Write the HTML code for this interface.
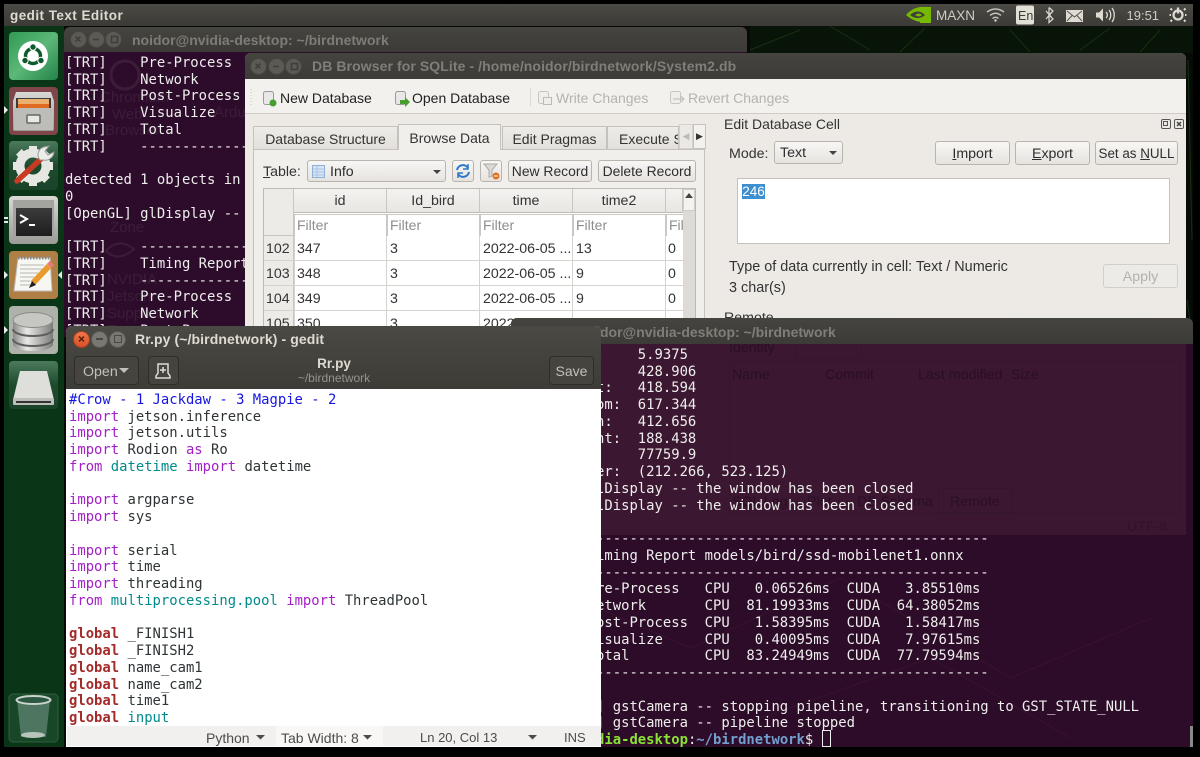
<!DOCTYPE html>
<html lang="en"><head><meta charset="utf-8"><title>gedit Text Editor</title>
<style>
html,body{margin:0;padding:0;background:#000}
body{width:1200px;height:757px;position:relative;overflow:hidden;font-family:"Liberation Sans",sans-serif;font-size:14px;color:#2e2e2e}
div{box-sizing:border-box}
.a,.t{position:absolute}
.t{white-space:pre;line-height:20px}
.mono{font-family:"DejaVu Sans Mono","Liberation Mono",monospace;font-size:13.88px;line-height:16.75px;white-space:pre}
.btn{position:absolute;background:linear-gradient(#f8f7f5,#e6e3df);border:1px solid #b8b4ae;border-radius:3px;text-align:center;line-height:22px;white-space:pre;color:#2e2e2e;font-size:14.2px}
.title{position:absolute;background:linear-gradient(#45443f,#3c3b37);border-radius:6px 6px 0 0}
.wb{position:absolute;width:17px;height:17px;border-radius:50%;background:#5b5a55;border:1px solid #47453f}
.th{position:absolute;top:189px;height:24px;background:linear-gradient(#f4f3f1,#e8e6e2);border-right:1px solid #c9c6c1;border-bottom:1px solid #bdbab5;text-align:center;line-height:25px;font-size:14.2px;color:#333}
.fl{position:absolute;top:214px;height:22px;background:#fff;border:1px solid #cbc8c3;border-bottom:0;color:#8d8d8d;padding-left:2px;line-height:21px;font-size:14px}
.c{position:absolute;font-size:14.2px;color:#333;line-height:20px;white-space:pre}
.tab{position:absolute;top:126px;height:24px;background:linear-gradient(#eeece8,#e3e0db);border:1px solid #c5c2bd;text-align:center;line-height:24px;font-size:14px;color:#333;white-space:pre}
.k{color:#a31fc7}.d{color:#008a8c}.g{color:#a52a2a;font-weight:bold}.n{color:#2e3436}
.gh{position:absolute;white-space:pre;color:#2a0e26;font-size:14.2px;line-height:20px}
</style></head><body>

<!-- wallpaper -->
<div class="a" style="left:4px;top:4px;width:1189px;height:743px;background:#070b07"></div>
<svg class="a" style="left:0;top:0" width="1200" height="757" fill="none">
<rect x="750" y="26" width="443" height="27" fill="#0e2a0e" opacity=".3"/>
<path d="M750 50 L800 30 M830 26 L870 50 M900 52 L925 28 M1010 30 L1030 52 M1080 50 L1110 28 M1140 52 L1160 30 M1188 60 L1192 240 M1187 300 L1193 340" stroke="#173010" stroke-width="1"/>
</svg>

<!-- launcher -->
<div class="a" style="left:4px;top:26px;width:60px;height:721px;background:#0a3516"></div>

<!-- terminal 1 -->
<div class="a" style="left:64px;top:27px;width:683px;height:310px;background:#2d0c2b;border-radius:6px 6px 0 0"></div>
<div class="title" style="left:64px;top:27px;width:683px;height:25px"></div>
<div class="wb" style="left:70px;top:31px"></div><div class="wb" style="left:88px;top:31px"></div><div class="wb" style="left:105px;top:31px"></div>
<div class="t" style="left:132px;top:30px;color:#7e7c76;font-weight:bold;font-size:14px">noidor@nvidia-desktop: ~/birdnetwork</div>
<!-- ghost desktop icons behind terminal 1 -->
<div class="t" style="left:100px;top:89px;color:#3b1c39;font-size:15px;line-height:17px;width:70px">Chromium</div>
<div class="t" style="left:112px;top:106px;color:#3b1c39;font-size:15px;line-height:17px">Web</div>
<div class="t" style="left:105px;top:122px;color:#3b1c39;font-size:15px;line-height:17px">Browser</div>
<div class="t" style="left:214px;top:104px;color:#3b1c39;font-size:15px;line-height:17px">Arduino</div>
<div class="t" style="left:110px;top:219px;color:#3b1c39;font-size:15px;line-height:17px">Zone</div>
<div class="t" style="left:107px;top:271px;color:#3b1c39;font-size:15px;line-height:17px">NVIDIA
Jetson
Support
Forums</div>
<svg class="a" style="left:100px;top:235px" width="40" height="30" fill="none" stroke="#3b1c39" stroke-width="2"><path d="M6 16 Q18 2 34 14 Q18 28 6 16Z"/></svg>
<svg class="a" style="left:105px;top:55px" width="40" height="40" fill="none" stroke="#3b1c39" stroke-width="3"><circle cx="20" cy="20" r="14"/></svg>
<div class="a mono" style="left:65px;top:54.750px;color:#eeeeec;width:180px;height:271px;overflow:hidden;">[TRT]    Pre-Process
[TRT]    Network
[TRT]    Post-Process
[TRT]    Visualize
[TRT]    Total
[TRT]    ---------------

detected 1 objects in image
0
[OpenGL] glDisplay -- the window

[TRT]    ---------------
[TRT]    Timing Report models
[TRT]    ---------------
[TRT]    Pre-Process
[TRT]    Network
[TRT]    Post-Process</div>

<!-- DB Browser window -->
<div class="a" style="left:245px;top:53px;width:941px;height:290px;background:#edeae6;border-radius:6px 6px 0 0"></div>
<div class="title" style="left:245px;top:53px;width:941px;height:26px"></div>
<div class="wb" style="left:250px;top:58px"></div><div class="wb" style="left:268px;top:58px"></div><div class="wb" style="left:285px;top:58px"></div>
<svg class="a" style="left:64px;top:27px" width="260" height="50" fill="none" stroke="#3e3d38" stroke-width="1.500">
<path d="M11.500 9.500l5 5M16.500 9.500l-5 5M29 12.500h6M47.500 9.500h6v6h-6z"/>
<path d="M191.500 36.500l5 5M196.500 36.500l-5 5M209 39.500h6M227.500 36.500h6v6h-6z"/>
</svg>
<div class="t" style="left:312px;top:56px;color:#807e78;font-weight:bold;font-size:14px;letter-spacing:.085px">DB Browser for SQLite - /home/noidor/birdnetwork/System2.db</div>
<div class="a" style="left:245px;top:79px;width:941px;height:35px;background:#f3f1ed;border-bottom:1px solid #cfccc7"></div>

<!-- toolbar -->
<svg class="a" style="left:245px;top:79px" width="560" height="35" fill="none">
<g><rect x="18.500" y="12.500" width="10" height="13" rx="2" fill="#e8e8e8" stroke="#9a9a9a"/><circle cx="28" cy="24" r="3.500" fill="#4a9e2f"/></g>
<g><rect x="150.500" y="12.500" width="10" height="13" rx="2" fill="#e8e8e8" stroke="#9a9a9a"/><path d="M155 21h5v-3l5 5-5 5v-3h-5z" fill="#4a9e2f"/></g>
<rect x="293.500" y="12.500" width="10" height="12" rx="2" fill="#f0eeea" stroke="#c7c5c1"/><rect x="298.500" y="18.500" width="8" height="7" fill="#f0eeea" stroke="#bdbbb7"/>
<rect x="425.500" y="12.500" width="10" height="12" rx="2" fill="#f0eeea" stroke="#c7c5c1"/><path d="M428 20h10M436 17l3 3-3 3" stroke="#bdbbb7"/>
<line x1="285.500" x2="285.500" y1="9" y2="27" stroke="#dcd9d4"/>
<line x1="6" y1="10" x2="6" y2="26" stroke="#c9c6c1" stroke-dasharray="1 2"/>
</svg>
<div class="t" style="left:280px;top:88px;font-size:14px;color:#222">New Database</div>
<div class="t" style="left:412px;top:88px;font-size:14px;color:#222">Open Database</div>
<div class="t" style="left:556px;top:88px;font-size:14px;color:#b5b3af">Write Changes</div>
<div class="t" style="left:688px;top:88px;font-size:14px;color:#b5b3af">Revert Changes</div>

<!-- tab pane -->
<div class="a" style="left:253px;top:149px;width:452px;height:190px;background:#f1efeb;border:1px solid #c5c2bd"></div>
<div class="tab" style="left:253px;width:145px">Database Structure</div>
<div class="tab" style="left:398px;top:124px;height:26px;width:103px;background:#f1efeb;border-bottom:0;z-index:2;line-height:26px">Browse Data</div>
<div class="tab" style="left:502px;width:105px">Edit Pragmas</div>
<div class="tab" style="left:607px;width:72px;text-align:left;padding-left:11px;overflow:hidden">Execute SQL</div>
<div class="a" style="left:679px;top:124px;width:14px;height:25px;background:#ece9e5;border:1px solid #d4d1cc;color:#bbb;font-size:9px;line-height:22px;text-align:center">◀</div>
<div class="a" style="left:693px;top:124px;width:13px;height:25px;background:#f3f1ee;border:1px solid #c5c2bd;color:#333;font-size:9px;line-height:22px;text-align:center">▶</div>

<div class="t" style="left:263px;top:162px;font-size:14.2px;color:#333"><u>T</u>able:</div>
<div class="btn" style="left:307px;top:160px;width:139px;height:22px;text-align:left;padding-left:22px;line-height:22px">Info</div>
<svg class="a" style="left:312px;top:163px" width="140" height="17" fill="none"><rect x=".5" y="2.500" width="12" height="12" fill="#d6e4f5" stroke="#8fb0d8"/><path d="M1 6h11M1 9h11M1 12h11M5 3v11" stroke="#a9c4e4"/><path d="M121 7h8l-4 4z" fill="#444"/></svg>
<div class="btn" style="left:452px;top:160px;width:22px;height:22px"></div>
<svg class="a" style="left:454px;top:162px" width="18" height="18" fill="none" stroke="#2a78c4" stroke-width="2"><path d="M3 8a6 6 0 0 1 11-2M15 10a6 6 0 0 1-11 2"/><path d="M14 2v5h-5M4 16v-5h5" stroke-width="1.500"/></svg>
<div class="btn" style="left:480px;top:160px;width:22px;height:22px"></div>
<svg class="a" style="left:482px;top:162px" width="18" height="18"><path d="M2 2h13l-5 6v6l-3 1V8z" fill="#dcdad6" stroke="#aaa"/><circle cx="14" cy="14" r="3.500" fill="#e0701e"/><rect x="12" y="13.500" width="4" height="1" fill="#fff"/></svg>
<div class="btn" style="left:508px;top:160px;width:84px;height:22px;line-height:21px;font-size:13.900px">New Record</div>
<div class="btn" style="left:598px;top:160px;width:98px;height:22px;line-height:21px;font-size:13.900px">Delete Record</div>

<!-- table -->
<div class="a" style="left:263px;top:188px;width:433px;height:150px;background:#fff;border:1px solid #bdbab5"></div>
<div class="a" style="left:264px;top:189px;width:30px;height:47px;background:#edebe7;border-right:1px solid #c9c6c1;border-bottom:1px solid #c9c6c1"></div>
<div class="th" style="left:294px;width:93px">id</div>
<div class="th" style="left:387px;width:93px">Id_bird</div>
<div class="th" style="left:480px;width:93px">time</div>
<div class="th" style="left:573px;width:93px">time2</div>
<div class="th" style="left:666px;width:17px"></div>
<div class="fl" style="left:294px;width:93px">Filter</div>
<div class="fl" style="left:387px;width:93px">Filter</div>
<div class="fl" style="left:480px;width:93px">Filter</div>
<div class="fl" style="left:573px;width:93px">Filter</div>
<div class="fl" style="left:666px;width:17px;overflow:hidden;border-right:0">Filter</div>
<div class="a" style="left:683px;top:189px;width:12px;height:148px;background:#dedbd7"></div>
<div class="a" style="left:683px;top:189px;width:12px;height:22px;background:#f4f3f0;border:1px solid #d0cdc8"></div>
<svg class="a" style="left:684px;top:192px" width="10" height="8"><path d="M1 6h8L5 1z" fill="#444"/></svg>
<!-- rows -->
<div class="a" style="left:264px;top:236px;width:30px;height:100px;background:#edebe7;border-right:1px solid #c9c6c1"></div>
<svg class="a" style="left:264px;top:236px" width="420" height="100"><path d="M0 24.500h419M0 49.500h419M0 74.500h419M122.500 0v100M215.500 0v100M308.500 0v100M401.500 0v100M30.500 0v100" stroke="#d6d3ce" fill="none"/></svg>
<div class="c" style="left:266px;top:239px">102</div><div class="c" style="left:297px;top:239px">347</div><div class="c" style="left:390px;top:239px">3</div><div class="c" style="left:483px;top:239px">2022-06-05 ...</div><div class="c" style="left:576px;top:239px">13</div><div class="c" style="left:668px;top:239px">0</div>
<div class="c" style="left:266px;top:264px">103</div><div class="c" style="left:297px;top:264px">348</div><div class="c" style="left:390px;top:264px">3</div><div class="c" style="left:483px;top:264px">2022-06-05 ...</div><div class="c" style="left:576px;top:264px">9</div><div class="c" style="left:668px;top:264px">0</div>
<div class="c" style="left:266px;top:289px">104</div><div class="c" style="left:297px;top:289px">349</div><div class="c" style="left:390px;top:289px">3</div><div class="c" style="left:483px;top:289px">2022-06-05 ...</div><div class="c" style="left:576px;top:289px">9</div><div class="c" style="left:668px;top:289px">0</div>
<div class="c" style="left:266px;top:314px">105</div><div class="c" style="left:297px;top:314px">350</div><div class="c" style="left:390px;top:314px">3</div><div class="c" style="left:483px;top:314px">2022-06-05 ...</div>

<!-- right dock -->
<div class="t" style="left:724px;top:114px;font-size:14px;color:#333">Edit Database Cell</div>
<svg class="a" style="left:1160px;top:118px" width="26" height="12" fill="none" stroke="#555"><rect x="1.500" y="1.500" width="9" height="9" rx="1.500"/><rect x="3.500" y="3.500" width="4" height="4"/><rect x="14.500" y="1.500" width="9" height="9" rx="1.500"/><path d="M17 4l4 4M21 4l-4 4" stroke-width="1.500" stroke="#444"/></svg>
<div class="t" style="left:729px;top:144px;font-size:14.2px;color:#333">Mode:</div>
<div class="btn" style="left:774px;top:141px;width:69px;height:23px;text-align:left;padding-left:5px">Text</div>
<svg class="a" style="left:828px;top:150px" width="10" height="6"><path d="M1 1h8L5 5z" fill="#444"/></svg>
<div class="btn" style="left:935px;top:141px;width:75px;height:24px;line-height:24px"><u>I</u>mport</div>
<div class="btn" style="left:1015px;top:141px;width:75px;height:24px;line-height:24px"><u>E</u>xport</div>
<div class="btn" style="left:1095px;top:141px;width:83px;height:24px;line-height:24px;font-size:13.400px">Set as <u>N</u>ULL</div>
<div class="a" style="left:737px;top:178px;width:433px;height:66px;background:#fff;border:1px solid #c5c2bd"></div>
<div class="a" style="left:742px;top:184px;width:23px;height:15px;background:#3d8fcf;color:#fff;font-size:13.5px;line-height:15px;text-align:center">246</div>
<div class="t" style="left:729px;top:257px;font-size:14.4px;color:#333">Type of data currently in cell: Text / Numeric</div>
<div class="t" style="left:729px;top:278px;font-size:14.4px;color:#333">3 char(s)</div>
<div class="btn" style="left:1103px;top:264px;width:75px;height:24px;line-height:24px;color:#b3b1ad;background:#ecebe7;border-color:#d2cfca">Apply</div>
<div class="t" style="left:724px;top:308px;font-size:14.2px;color:#333">Remote</div>

<!-- terminal 2 -->
<div class="a" style="left:511px;top:318px;width:682px;height:429px;background:#2c0c28;border-radius:6px 6px 0 0;overflow:hidden">
 <div class="a" style="left:0;top:26px;width:675px;height:191px;background:#3b1731"></div>
 <svg class="a" style="left:0;top:0" width="682" height="429" fill="none" stroke="#4a1f3c" opacity=".4"><path d="M40 270L180 330L330 260M330 260L500 360M500 360L640 300M250 400L420 340L560 420"/></svg>
</div>
<svg class="a" style="left:511px;top:318px" width="682" height="230" fill="none" stroke="#36152e"><rect x="218.500" y="43.500" width="450" height="152"/><rect x="284.500" y="18.500" width="66" height="22"/><rect x="427.500" y="170.500" width="73" height="24"/></svg>
<div class="gh" style="left:729px;top:338px">Identity</div>
<div class="gh" style="left:732px;top:365px">Name</div>
<div class="gh" style="left:825px;top:365px">Commit</div>
<div class="gh" style="left:918px;top:365px">Last modified</div>
<div class="gh" style="left:1011px;top:365px">Size</div>
<div class="gh" style="left:732px;top:492px">SQL Log</div>
<div class="gh" style="left:807px;top:492px">Plot</div>
<div class="gh" style="left:857px;top:492px">DB Schema</div>
<div class="gh" style="left:950px;top:492px">Remote</div>
<div class="gh" style="left:1127px;top:517px;color:#331329">UTF-8</div>
<div class="title" style="left:511px;top:318px;width:682px;height:26px"></div>
<div class="t" style="left:579px;top:322px;color:#807e78;font-weight:bold;font-size:14px">noidor@nvidia-desktop: ~/birdnetwork</div>
<div class="a mono" style="left:512.500px;top:346.750px;color:#eeeeec;width:680px;height:400px;overflow:hidden">   -- Left:    5.9375
   -- Top:     428.906
   -- Right:   418.594
   -- Bottom:  617.344
   -- Width:   412.656
   -- Height:  188.438
   -- Area:    77759.9
   -- Center:  (212.266, 523.125)
[OpenGL] glDisplay -- the window has been closed
[OpenGL] glDisplay -- the window has been closed

[TRT]    ------------------------------------------------
[TRT]    Timing Report models/bird/ssd-mobilenet1.onnx
[TRT]    ------------------------------------------------
[TRT]    Pre-Process   CPU   0.06526ms  CUDA   3.85510ms
[TRT]    Network       CPU  81.19933ms  CUDA  64.38052ms
[TRT]    Post-Process  CPU   1.58395ms  CUDA   1.58417ms
[TRT]    Visualize     CPU   0.40095ms  CUDA   7.97615ms
[TRT]    Total         CPU  83.24949ms  CUDA  77.79594ms
[TRT]    ------------------------------------------------

[gstreamer] gstCamera -- stopping pipeline, transitioning to GST_STATE_NULL
[gstreamer] gstCamera -- pipeline stopped
<span style="color:#8ae234;font-weight:bold">noidor@nvidia-desktop</span>:<span style="color:#729fcf;font-weight:bold">~/birdnetwork</span>$ </div>
<div class="a" style="left:822px;top:730px;width:9px;height:17px;border:1px solid #eee"></div>
<div class="a" style="left:1190px;top:726px;width:3px;height:21px;background:#8a8a8a"></div>

<!-- gedit -->
<div class="a" style="left:66px;top:326px;width:535px;height:421px;background:#fff;border-radius:6px 6px 0 0;overflow:hidden">
 <div class="a" style="left:0;top:0;width:535px;height:63px;background:linear-gradient(#4a4943,#3d3c37)"></div>
</div>
<div class="wb" style="left:73px;top:331px;background:linear-gradient(#f0774a,#d9502a);border-color:#a8401f"></div>
<div class="wb" style="left:91px;top:331px;background:#7a7872;border-color:#5a5852"></div>
<div class="wb" style="left:109px;top:331px;background:#7a7872;border-color:#5a5852"></div>
<svg class="a" style="left:70px;top:328px" width="60" height="24" fill="none"><path d="M9 8.500l5 5M14 8.500l-5 5" stroke="#5a1f0a" stroke-width="1.500"/><path d="M26 11h7" stroke="#4a4842" stroke-width="2"/><rect x="44.500" y="7.500" width="7" height="7" stroke="#4a4842"/></svg>
<div class="t" style="left:135px;top:329px;color:#dfdbd2;font-weight:bold;font-size:14px;letter-spacing:.1px">Rr.py (~/birdnetwork) - gedit</div>
<div class="a" style="left:74px;top:356px;width:65px;height:29px;border:1px solid #2e2d2a;border-radius:4px;background:#45443f"></div>
<div class="t" style="left:83px;top:362px;color:#c3c0b9;font-size:14.2px">Open</div>
<svg class="a" style="left:119px;top:368px" width="10" height="6"><path d="M0 0h10L5 5z" fill="#c3c0b9"/></svg>
<div class="a" style="left:148px;top:356px;width:31px;height:29px;border:1px solid #2e2d2a;border-radius:4px;background:#45443f"></div>
<svg class="a" style="left:154px;top:362px" width="18" height="18" fill="none" stroke="#dfdbd2" stroke-width="1.500"><path d="M4 2h10v9l2 3v2H2v-2l2-3z"/><path d="M9 5v6M6 8h6"/></svg>
<div class="t" style="left:234px;top:354px;width:200px;text-align:center;color:#dfdbd2;font-weight:bold;font-size:13.500px">Rr.py</div>
<div class="t" style="left:234px;top:368px;width:200px;text-align:center;color:#96938c;font-size:12px">~/birdnetwork</div>
<div class="a" style="left:549px;top:356px;width:45px;height:29px;border:1px solid #2e2d2a;border-radius:4px;background:#45443f;color:#c3c0b9;text-align:center;line-height:28px;font-size:14px">Save</div>
<div class="a mono" style="left:69px;top:391.750px;width:530px;height:334px;overflow:hidden;color:#2e3436"><span style="color:#1616e0">#Crow - 1 Jackdaw - 3 Magpie - 2</span>
<span class="k">import</span> jetson.inference
<span class="k">import</span> jetson.utils
<span class="k">import</span> Rodion <span class="k">as</span> Ro
<span class="k">from</span> <span class="d">datetime</span> <span class="k">import</span> datetime

<span class="k">import</span> argparse
<span class="k">import</span> sys

<span class="k">import</span> serial
<span class="k">import</span> time
<span class="k">import</span> threading
<span class="k">from</span> <span class="d">multiprocessing.pool</span> <span class="k">import</span> ThreadPool

<span class="g">global</span> _FINISH1
<span class="g">global</span> _FINISH2
<span class="g">global</span> name_cam1
<span class="g">global</span> name_cam2
<span class="g">global</span> time1
<span class="g">global</span> <span class="d">input</span></div>
<div class="a" style="left:67px;top:726px;width:534px;height:20px;background:#f1f0ee"></div>
<div class="a" style="left:276px;top:726px;width:107px;height:20px;background:#f8f7f6"></div>
<div class="t" style="left:206px;top:728px;font-size:14px;color:#4c4c4c">Python</div>
<div class="t" style="left:281px;top:728px;font-size:14px;color:#4c4c4c">Tab Width: 8</div>
<div class="t" style="left:420px;top:728px;font-size:13px;color:#4c4c4c">Ln 20, Col 13</div>
<div class="t" style="left:564px;top:728px;font-size:13px;color:#4c4c4c">INS</div>
<svg class="a" style="left:250px;top:733px" width="290" height="8" fill="#4c4c4c"><path d="M6 2h9l-4.500 4.500zM113 2h9l-4.500 4.500zM278 2h9l-4.500 4.500z"/></svg>

<!-- top panel -->
<div class="a" style="left:4px;top:4px;width:1189px;height:22px;background:linear-gradient(#4b4a44,#3b3a36)"></div>
<div class="t" style="left:10px;top:6px;color:#dfdbd2;font-weight:bold;font-size:13.500px;letter-spacing:.45px">gedit Text Editor</div>
<svg class="a" style="left:900px;top:4px" width="300" height="22" fill="none">
 <rect x="20" y="3" width="11" height="16" fill="#76b900"/>
 <path d="M6 11 Q16 0 30 4 V18 Q16 20 6 11Z" fill="#76b900"/>
 <path d="M10 11 Q18 4 25 11 Q18 17 10 11Z" fill="#3f3e3a"/><path d="M15 11 Q19 8 22 11 Q19 14 15 11Z" fill="#76b900"/>
 <path d="M87 8Q95.500 2 104 8M90 11.500Q95.500 7 101 11.500M92.500 14.500Q95.500 12 98.500 14.500" stroke="#c6c3bc" stroke-width="1.400"/><circle cx="95.500" cy="16.500" r="1.200" fill="#dfdbd2"/>
 <rect x="116" y="1.500" width="18" height="19" rx="2" fill="#e2dfd7"/>
 <path d="M149 3.500l4 3.500-4 4 4 4-4 3.500V3.500M146 7l7 8M146 15l7-8" stroke="#dfdbd2" stroke-width="1.200"/>
 <rect x="166.500" y="6.500" width="16" height="11" fill="#dfdbd2" stroke="#dfdbd2"/><path d="M167 7l7.500 6 7.500-6M167 17l5.500-6M182 17l-5.500-6" stroke="#55534e"/>
 <path d="M196 8.500h3l4-4v13l-4-4h-3z" fill="#dfdbd2"/><path d="M206 8a4 4 0 0 1 0 6M209 6a8 8 0 0 1 0 10M212 4a12 12 0 0 1 0 14" stroke="#dfdbd2" stroke-width="1.300"/>
 <circle cx="278" cy="11" r="4.500" stroke="#dfdbd2" stroke-width="2.200"/><path d="M278 3.500v6" stroke="#dfdbd2" stroke-width="2.200"/><path d="M272 6l-1.500-1.500M284 6l1.500-1.500M272 16l-1.500 1.500M284 16l1.500 1.500M271 11h-1.500M285 11h1.500" stroke="#dfdbd2" stroke-width="2"/>
</svg>
<div class="t" style="left:936px;top:6px;color:#cfccc4;font-size:13.500px">MAXN</div>
<div class="t" style="left:1018px;top:6px;color:#3c3b37;font-size:12.500px">En</div>
<div class="t" style="left:1126.500px;top:6px;color:#cfccc4;font-size:13px">19:51</div>

<!-- launcher icons -->
<svg class="a" style="left:0;top:0" width="66" height="757">
<defs>
<linearGradient id="gr" x1="0" y1="0" x2="1" y2="1"><stop offset="0" stop-color="#2f9a52"/><stop offset=".5" stop-color="#5cb878"/><stop offset="1" stop-color="#23824a"/></linearGradient>
<linearGradient id="sv" x1="0" y1="0" x2="0" y2="1"><stop offset="0" stop-color="#d8d8d4"/><stop offset="1" stop-color="#9b9c98"/></linearGradient>
<linearGradient id="cy" x1="0" y1="0" x2="1" y2="0"><stop offset="0" stop-color="#8a8a88"/><stop offset=".35" stop-color="#e8e8e6"/><stop offset="1" stop-color="#7c7c7a"/></linearGradient>
<linearGradient id="dk" x1="0" y1="0" x2="0" y2="1"><stop offset="0" stop-color="#4c7a5c"/><stop offset=".5" stop-color="#1d4a2d"/><stop offset="1" stop-color="#1a4429"/></linearGradient>
<linearGradient id="scr" x1="0" y1="0" x2="0" y2="1"><stop offset="0" stop-color="#3c3c3c"/><stop offset="1" stop-color="#1d1d1d"/></linearGradient>
</defs>
<!-- ubuntu -->
<rect x="9" y="32" width="49" height="48" rx="4" fill="url(#gr)"/>
<circle cx="33" cy="56" r="15" fill="#fff"/>
<circle cx="33" cy="56" r="7.500" fill="none" stroke="#0f5a2c" stroke-width="3.500"/>
<circle cx="33" cy="47" r="3.200" fill="#0f5a2c" stroke="#fff"/><circle cx="25" cy="60.500" r="3.200" fill="#0f5a2c" stroke="#fff"/><circle cx="41" cy="60.500" r="3.200" fill="#0f5a2c" stroke="#fff"/>
<!-- files -->
<rect x="9" y="87" width="49" height="48" rx="4" fill="#7f4548"/>
<path d="M16 92h35l3 9v28a2 2 0 0 1-2 2H15a2 2 0 0 1-2-2v-28z" fill="url(#sv)"/>
<rect x="16" y="98" width="35" height="13" fill="#3b3b3b"/><rect x="18" y="99" width="31" height="5" fill="#eab070"/><rect x="18" y="104" width="31" height="4" fill="#e06a22"/><rect x="14" y="108" width="39" height="22" fill="#bcbcb8"/>
<rect x="27" y="115" width="13" height="8" rx="1" fill="#e8e8e4" stroke="#666" stroke-width="1.500"/>
<!-- settings -->
<rect x="9" y="141" width="49" height="49" rx="4" fill="url(#dk)"/>
<g transform="translate(33 166)"><circle r="13" fill="none" stroke="#e6e6e2" stroke-width="9"/><path d="M-4-20h8v7h-8zM-4 13h8v7h-8zM-20-4h7v8h-7zM13-4h7v8h-7z" fill="#e6e6e2"/><path d="M-4-20h8v7h-8zM-4 13h8v7h-8zM-20-4h7v8h-7zM13-4h7v8h-7z" fill="#e6e6e2" transform="rotate(45)"/></g>
<path d="M17 181L42 158" stroke="#c83a22" stroke-width="5.500" stroke-linecap="round"/>
<path d="M40 160a8 8 0 0 1 4-13l5-1-4 5 3 4 6-3a9 9 0 0 1-11 8z" fill="#ececea" stroke="#9a9a96"/>
<!-- terminal -->
<rect x="9" y="196" width="49" height="48" rx="4" fill="url(#sv)"/>
<rect x="13" y="200" width="41" height="37" rx="1" fill="#a3a4a0"/><rect x="16" y="208" width="36" height="28" fill="url(#scr)"/>
<path d="M20 215l7 4-7 4" fill="none" stroke="#fff" stroke-width="2"/><rect x="29" y="224" width="6" height="2" fill="#fff"/>
<!-- gedit -->
<rect x="9" y="251" width="49" height="48" rx="4" fill="#b07f45"/>
<path d="M18 258h32l2 33H14z" fill="#f6f6f2" stroke="#bbb"/>
<path d="M18 258h31" stroke="#888" stroke-width="3" stroke-dasharray="1.500 1.500"/>
<path d="M20 265h24M20 269h22M20 273h18M20 277h14M20 281h10M20 285h12" stroke="#b5b5b1"/>
<path d="M33 283l16-17" stroke="#e89a2c" stroke-width="6"/><path d="M49 266l3-3" stroke="#e87a7a" stroke-width="6"/><path d="M29 288l3-7 4 4z" fill="#222"/>
<!-- db -->
<rect x="9" y="306" width="49" height="48" rx="4" fill="#afb1ab"/>
<path d="M13 321v23c0 4 9 7 20 7s20-3 20-7v-23z" fill="url(#cy)"/>
<ellipse cx="33" cy="320" rx="20" ry="7.500" fill="#c6c6c3" stroke="#8a8a88"/>
<path d="M13 329c0 4 9 7 20 7s20-3 20-7M13 339c0 4 9 7 20 7s20-3 20-7" fill="none" stroke="#5f5f5d" stroke-width="2"/>
<!-- drive -->
<rect x="9" y="361" width="49" height="48" rx="4" fill="url(#dk)"/>
<path d="M20 371h27l7 29H13z" fill="#dededa"/><rect x="13" y="398" width="41" height="7" rx="1" fill="#bdbdb9"/><rect x="16" y="401" width="35" height="2" fill="#333"/>
<!-- trash -->
<rect x="9" y="694" width="49" height="48" rx="4" fill="#184728" stroke="#2f5f40"/>
<path d="M17 700l4 37h25l4-37z" fill="#4d7560"/>
<ellipse cx="33.500" cy="700" rx="17" ry="4" fill="#2c5842" stroke="#c8d4cc" stroke-width="2"/>
<ellipse cx="33" cy="735" rx="12" ry="3" fill="#b8c4bc"/>
<!-- pips -->
<path d="M4 106v8l4-4zM4 271v8l4-4zM4 326v8l4-4zM62 271v8l-4-4z" fill="#e8e8e8"/>
<rect x="4" y="217" width="4" height="2" fill="#e8e8e8"/><rect x="4" y="221" width="4" height="2" fill="#e8e8e8"/>
</svg>
</body></html>
